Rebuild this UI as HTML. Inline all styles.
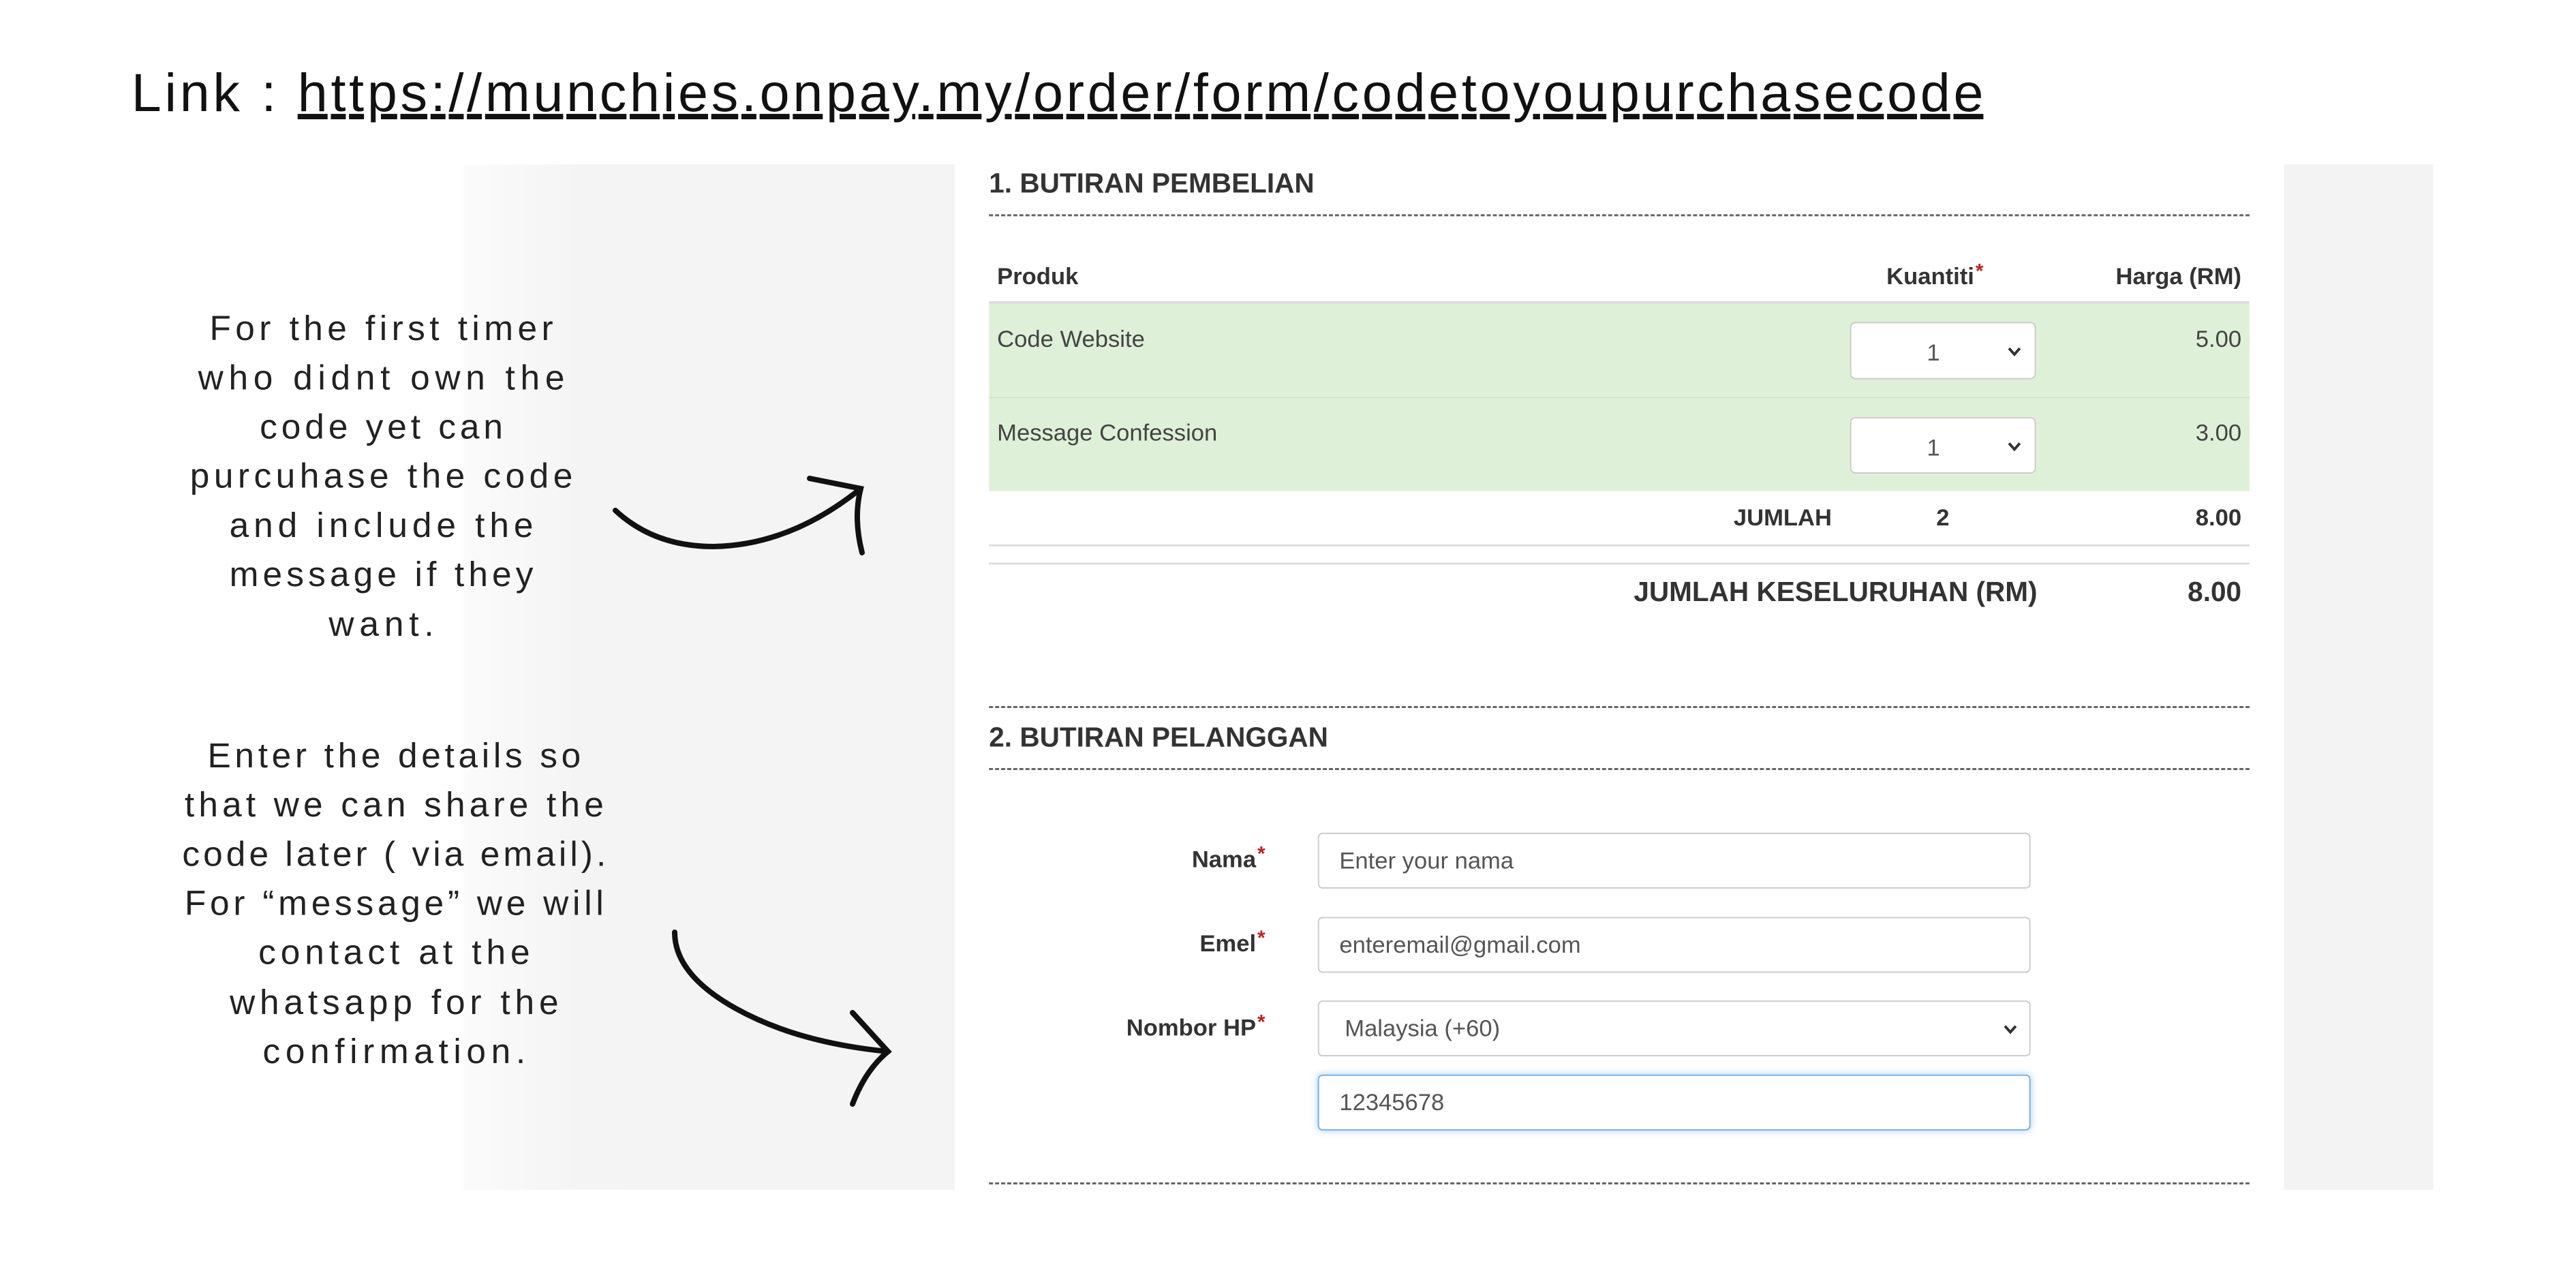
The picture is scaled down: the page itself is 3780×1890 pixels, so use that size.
<!DOCTYPE html>
<html><head><meta charset="utf-8"><style>
html,body{margin:0;padding:0;}
body{width:3780px;height:1890px;position:relative;background:#fff;overflow:hidden;font-family:"Liberation Sans",sans-serif;}
#w{position:absolute;left:0;top:0;width:3780px;height:1890px;transform:scale(0.9886);transform-origin:0 0;}
.abs{position:absolute;}
.dash{position:absolute;left:1468px;width:1871px;height:0;border-top:3px dashed #666;}
.t{position:absolute;color:#333;font-size:35px;white-space:nowrap;line-height:1;}
.b{font-weight:bold;}
.sel{position:absolute;background:#fff;border:2px solid #ccc;border-radius:8px;box-sizing:border-box;}
.inp{position:absolute;left:1956px;width:1058px;height:83px;background:#fff;border:2px solid #ccc;border-radius:7px;box-sizing:border-box;color:#555;font-size:35px;line-height:79px;padding-left:30px;}
.ast{color:#b22;font-size:30px;position:relative;top:-10px;margin-left:2px;}
.chev{position:absolute;}
</style></head><body><div id="w">
<div class="abs" style="left:688px;top:244px;width:2924px;height:1522px;background:linear-gradient(90deg,#fbfbfb 0,#f4f4f4 6%,#f3f3f3 100%);"></div>
<div class="abs" style="left:1417px;top:244px;width:1973px;height:1522px;background:#fff;"></div>

<svg class="abs" style="left:0;top:0" width="3780" height="1890">
<text x="195" y="165" font-family="Liberation Sans" font-size="80" fill="#111" textLength="2749" lengthAdjust="spacing">Link : <tspan text-decoration="underline">https://munchies.onpay.my/order/form/codetoyoupurchasecode</tspan></text>
<g font-family="Liberation Sans" font-size="52" fill="#222" text-anchor="middle">
<text x="566" y="505" textLength="510">For the first timer</text>
<text x="566" y="578" textLength="544">who didnt own the</text>
<text x="566" y="651" textLength="361">code yet can</text>
<text x="566" y="724" textLength="568">purcuhase the code</text>
<text x="566" y="797" textLength="451">and include the</text>
<text x="566" y="870" textLength="451">message if they</text>
<text x="566" y="944" textLength="156">want.</text>
<text x="585" y="1139" textLength="554">Enter the details so</text>
<text x="585" y="1212" textLength="622">that we can share the</text>
<text x="585" y="1285" textLength="629">code later ( via email).</text>
<text x="585" y="1358" textLength="622">For “message” we will</text>
<text x="585" y="1431" textLength="403">contact at the</text>
<text x="585" y="1505" textLength="488">whatsapp for the</text>
<text x="585" y="1578" textLength="390">confirmation.</text>
</g>
</svg>

<div class="t b" style="left:1468px;top:252px;font-size:41px;">1. BUTIRAN PEMBELIAN</div>
<div class="dash" style="top:318px;"></div>
<div class="t b" style="left:1480px;top:393px;">Produk</div>
<div class="t b" style="left:2800px;top:393px;">Kuantiti<span class="ast">*</span></div>
<div class="t b" style="right:453px;top:393px;">Harga (RM)</div>
<div class="abs" style="left:1468px;top:447px;width:1871px;height:4px;background:#ddd;"></div>
<div class="abs" style="left:1468px;top:451px;width:1871px;height:278px;background:#dff0d8;"></div>
<div class="abs" style="left:1468px;top:589px;width:1871px;height:2px;background:#d3e3cc;"></div>
<div class="t" style="left:1480px;top:486px;color:#444;">Code Website</div>
<div class="t" style="right:453px;top:486px;color:#444;">5.00</div>
<div class="sel" style="left:2746px;top:478px;width:276px;height:85px;"><span class="t" style="left:112px;top:26px;color:#555;">1</span><svg class="chev" style="left:232px;top:35px" width="20" height="14"><path d="M2 2 L10 11 L18 2" fill="none" stroke="#333" stroke-width="4"/></svg></div>
<div class="t" style="left:1480px;top:625px;color:#444;">Message Confession</div>
<div class="t" style="right:453px;top:625px;color:#444;">3.00</div>
<div class="sel" style="left:2746px;top:619px;width:276px;height:84px;"><span class="t" style="left:112px;top:26px;color:#555;">1</span><svg class="chev" style="left:232px;top:35px" width="20" height="14"><path d="M2 2 L10 11 L18 2" fill="none" stroke="#333" stroke-width="4"/></svg></div>
<div class="t b" style="right:1061px;top:751px;">JUMLAH</div>
<div class="t b" style="left:2874px;top:751px;">2</div>
<div class="t b" style="right:453px;top:751px;">8.00</div>
<div class="abs" style="left:1468px;top:808px;width:1871px;height:3px;background:#ddd;"></div>
<div class="abs" style="left:1468px;top:835px;width:1871px;height:3px;background:#ddd;"></div>
<div class="t b" style="right:756px;top:858px;font-size:41px;">JUMLAH KESELURUHAN (RM)</div>
<div class="t b" style="right:453px;top:858px;font-size:41px;">8.00</div>

<div class="dash" style="top:1048px;"></div>
<div class="t b" style="left:1468px;top:1074px;font-size:41px;">2. BUTIRAN PELANGGAN</div>
<div class="dash" style="top:1140px;"></div>
<div class="t b" style="right:1902px;top:1258px;">Nama<span class="ast">*</span></div>
<div class="inp" style="top:1236px;">Enter your nama</div>
<div class="t b" style="right:1902px;top:1383px;">Emel<span class="ast">*</span></div>
<div class="inp" style="top:1361px;">enteremail@gmail.com</div>
<div class="t b" style="right:1902px;top:1508px;">Nombor HP<span class="ast">*</span></div>
<div class="inp" style="top:1485px;padding-left:38px;">Malaysia (+60)<svg class="chev" style="right:18px;top:34px" width="20" height="14"><path d="M2 2 L10 11 L18 2" fill="none" stroke="#333" stroke-width="4"/></svg></div>
<div class="inp" style="top:1595px;border-color:#7fb0e6;box-shadow:0 0 10px rgba(102,175,233,.6);">12345678</div>
<div class="dash" style="top:1755px;"></div>
</div>
<svg class="abs" style="left:0;top:0" width="3780" height="1890">
<g fill="none" stroke="#111" stroke-width="8" stroke-linecap="round">
<path d="M903 749 Q960 802 1047 802 Q1160 800 1263 717"/>
<path d="M1188 702 L1263 717 Q1252 760 1265 811"/>
<path d="M990 1368 Q990 1430 1080 1480 Q1170 1530 1303 1543"/>
<path d="M1251 1486 L1303 1543 Q1270 1570 1251 1620"/>
</g>
</svg>
</body></html>
